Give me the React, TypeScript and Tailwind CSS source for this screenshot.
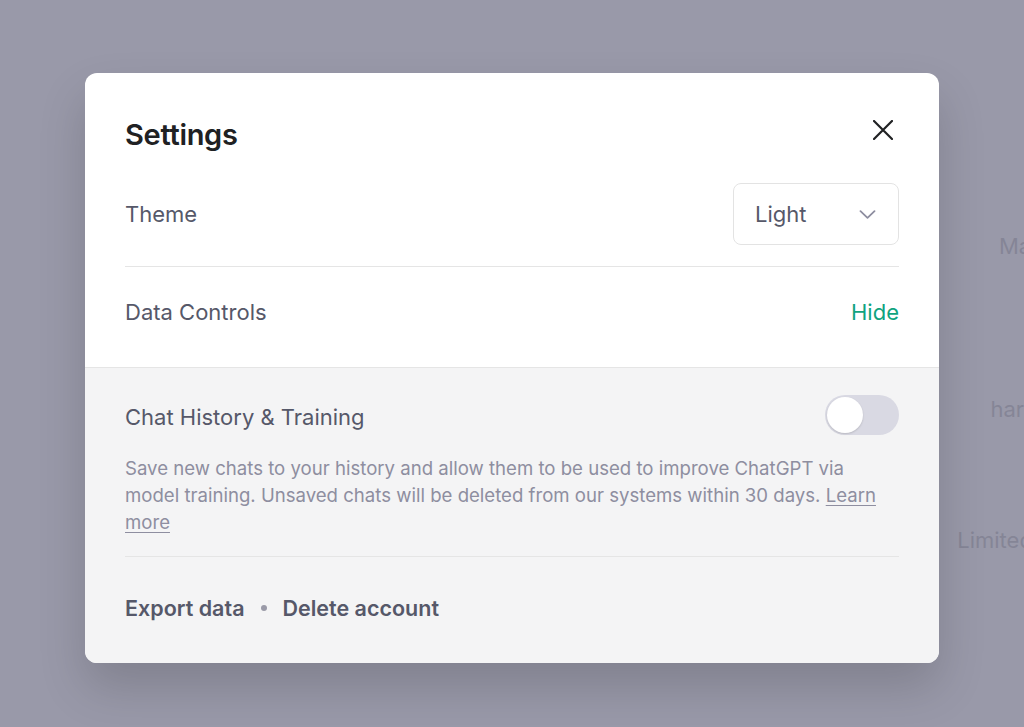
import React from "react";

function CloseIcon() {
  return (
    <svg width="20" height="20" viewBox="0 0 20 20" fill="none" className="mt-px mr-[6px]">
      <path d="M1 1L19 19M19 1L1 19" stroke="#202123" strokeWidth="2.2" strokeLinecap="round" />
    </svg>
  );
}

function Chevron() {
  return (
    <svg width="17" height="9" viewBox="0 0 17 9" fill="none">
      <path d="M1.5 1.2L8.5 7.8L15.5 1.2" stroke="#8e8ea0" strokeWidth="1.8" strokeLinecap="round" strokeLinejoin="round" />
    </svg>
  );
}

function BgCard({ lines, tall }: { lines: string[]; tall?: boolean }) {
  return (
    <div
      className={
        tall
          ? "h-[130px] rounded-md bg-[#f7f7f8] py-[17px] text-center text-[22px] leading-[32px] text-[#343541]"
          : "rounded-md bg-[#f7f7f8] py-[17px] text-center text-[22px] leading-[32px] text-[#343541]"
      }
    >
      {lines.map((l) => (
        <div key={l} className="whitespace-nowrap">
          {l}
        </div>
      ))}
    </div>
  );
}

export default function App() {
  return (
    <div className="relative h-[727px] w-[1024px] overflow-hidden bg-white font-['Inter',sans-serif]">
      {/* background page */}
      <div className="absolute inset-0 pl-[948px] pt-[213px]">
        <div className="flex w-[480px] flex-col gap-[33px]">
          <BgCard lines={["May occasionally generate incorrect", "information"]} />
          <BgCard tall lines={["May occasionally produce", "harmful instructions or biased content"]} />
          <BgCard lines={["Limited knowledge of world and events after", "2021"]} />
        </div>
      </div>
      {/* overlay */}
      <div className="absolute inset-0 bg-[#8e8ea0]/90" />
      {/* modal */}
      <div className="absolute inset-0 pl-[85px] pt-[73px]">
        <div className="w-[854px] overflow-hidden rounded-xl bg-white shadow-[0_24px_48px_rgba(0,0,0,0.16)]">
          <div className="px-10">
            <div className="flex items-start justify-between pt-[46px]">
              <h2 className="text-[29px] font-semibold leading-8 tracking-[-0.3px] text-[#202123]">Settings</h2>
              <CloseIcon />
            </div>
            <div className="mt-8 flex items-center justify-between border-b border-[#e5e5e5] pb-[21px]">
              <span className="text-[22px] leading-7 text-[#565869]">Theme</span>
              <div className="flex h-[62px] w-[166px] items-center justify-between rounded-lg border border-[#e3e3e3] pl-[21px] pr-[22px]">
                <span className="text-[22px] leading-7 text-[#565869]">Light</span>
                <Chevron />
              </div>
            </div>
            <div className="flex items-center justify-between pb-[41px] pt-[31px]">
              <span className="text-[22px] leading-7 text-[#565869]">Data Controls</span>
              <span className="text-[22px] leading-7 text-[#10a37f]">Hide</span>
            </div>
          </div>
          <div className="border-t border-[#e5e5e5] bg-[#f4f4f5] px-10">
            <div className="border-b border-[#e5e5e5] pb-5 pt-[27px]">
              <div className="flex items-center justify-between">
                <span className="mt-[3px] text-[22px] leading-7 text-[#565869]">Chat History &amp; Training</span>
                <div className="flex h-10 w-[74px] items-center rounded-full bg-[#d9d9e3] px-[2px]">
                  <div className="h-9 w-9 rounded-full bg-white shadow-[0_1px_2px_rgba(0,0,0,0.15)]" />
                </div>
              </div>
              <p className="mt-5 text-[18.6px] leading-[27px] text-[#8e8ea0]">
                Save new chats to your history and allow them to be used to improve ChatGPT via
                <br />
                model training. Unsaved chats will be deleted from our systems within 30 days.{" "}
                <span className="underline underline-offset-[3px]">Learn</span>
                <br />
                <span className="underline underline-offset-[3px]">more</span>
              </p>
            </div>
            <div className="flex items-center gap-4 pb-[41px] pt-[37px]">
              <span className="text-[21.5px] font-semibold leading-7 text-[#565869]">Export data</span>
              <span className="h-[6px] w-[6px] rounded-full bg-[#9a9aa8]" />
              <span className="text-[21.5px] font-semibold leading-7 text-[#565869]">Delete account</span>
            </div>
          </div>
        </div>
      </div>
    </div>
  );
}
